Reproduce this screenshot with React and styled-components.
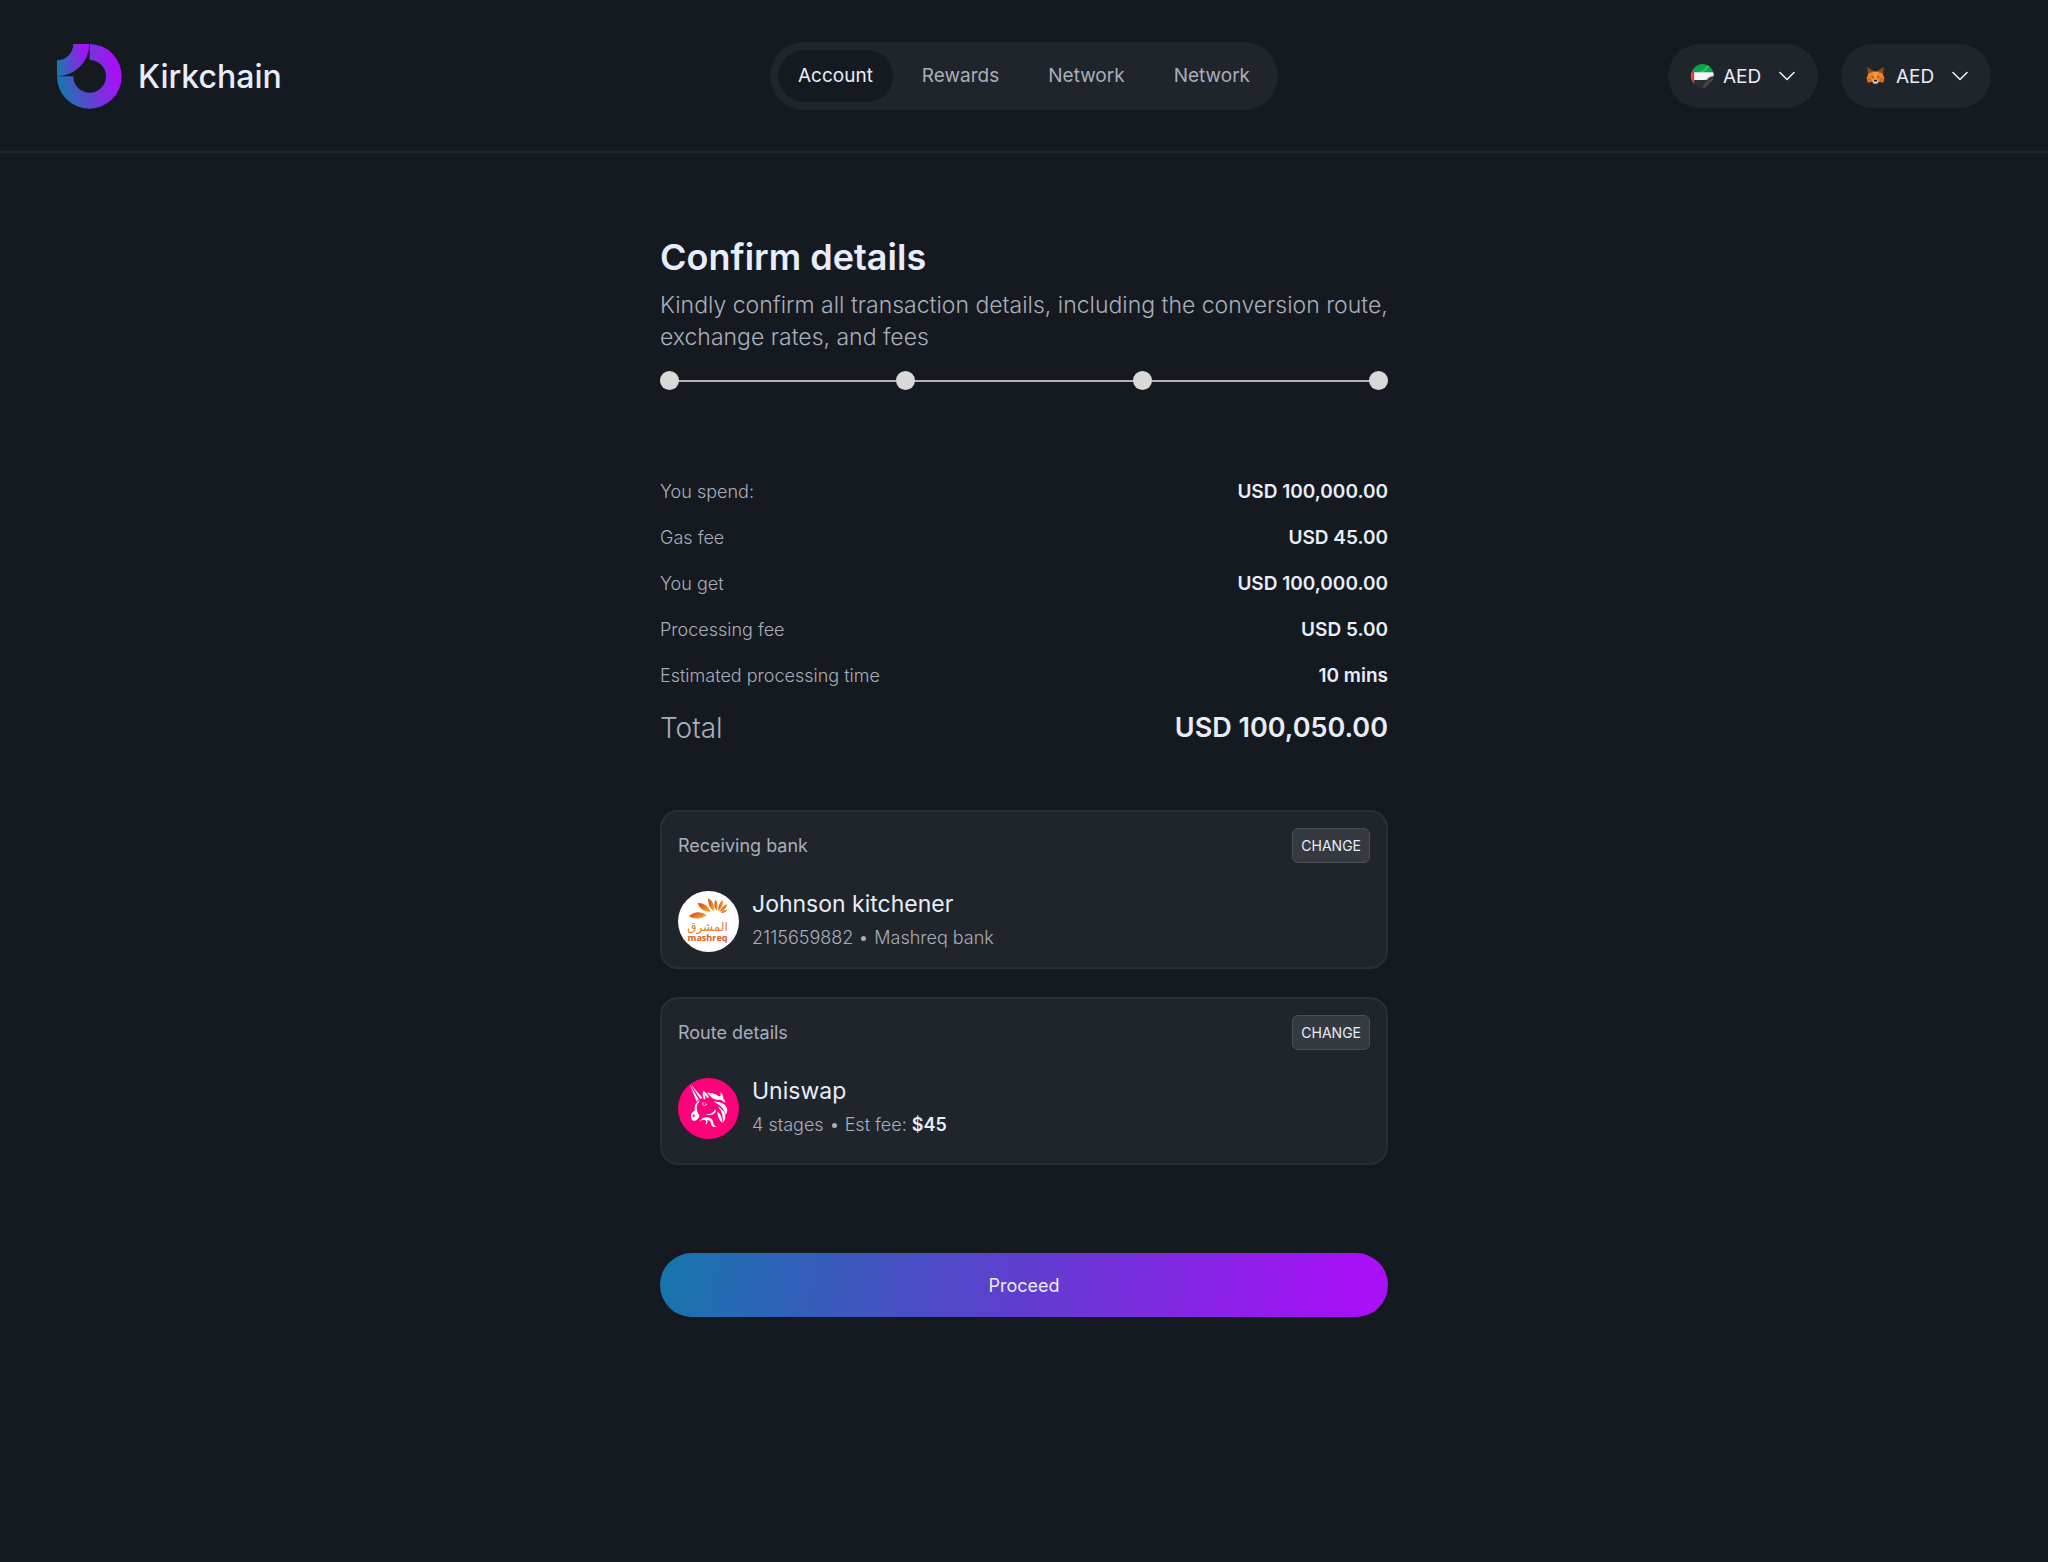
import styled, { createGlobalStyle } from "styled-components";
import { useState } from "react";

// Colors
const Colors = {
  background: "#151a20",
  panel: "#20252b",
  border: "#2a2f33",
  text: "#e8edfb",
  muted: "#a9aebc",
  dot: "#d9d9d9",
};

const navItems = ["Account", "Rewards", "Network", "Network"];

const details = [
  { label: "You spend:", value: "USD 100,000.00" },
  { label: "Gas fee", value: "USD 45.00" },
  { label: "You get", value: "USD 100,000.00" },
  { label: "Processing fee", value: "USD 5.00" },
  { label: "Estimated processing time", value: "10 mins" },
];

export default function App() {
  const [active, setActive] = useState(0);

  return (
    <>
      <GlobalStyle />
      <Header>
        <Brand href="#">
          <Logo />
          Kirkchain
        </Brand>
        <Nav>
          {navItems.map((item, i) => (
            <NavLink
              key={i}
              href="#"
              $active={i === active}
              onClick={() => setActive(i)}
            >
              {item}
            </NavLink>
          ))}
        </Nav>
        <Pickers>
          <Picker label="Currency" icon={<Flag />} />
          <Picker label="Wallet currency" icon={<Fox />} />
        </Pickers>
      </Header>
      <Main>
        <Title>Confirm details</Title>
        <Subtitle>
          Kindly confirm all transaction details, including the conversion
          route, exchange rates, and fees
        </Subtitle>
        <Steps>
          <Step />
          <Step />
          <Step />
          <Step />
        </Steps>

        {/* Transaction summary */}
        <Summary>
          {details.map((row) => (
            <Row key={row.label}>
              <dt>{row.label}</dt>
              <Amount>{row.value}</Amount>
            </Row>
          ))}
          <TotalRow>
            <dt>Total</dt>
            <TotalAmount>USD 100,050.00</TotalAmount>
          </TotalRow>
        </Summary>

        <Cards>
          <Card>
            <CardHeader>
              <CardLabel>Receiving bank</CardLabel>
              <ChangeButton type="button">CHANGE</ChangeButton>
            </CardHeader>
            <Party>
              <Mashreq />
              <div>
                <PartyName>Johnson kitchener</PartyName>
                <PartyInfo>
                  <span>2115659882</span>
                  <Bullet />
                  <span>Mashreq bank</span>
                </PartyInfo>
              </div>
            </Party>
          </Card>
          <Card $roomy>
            <CardHeader>
              <CardLabel>Route details</CardLabel>
              <ChangeButton type="button">CHANGE</ChangeButton>
            </CardHeader>
            <Party>
              <Unicorn />
              <div>
                <PartyName>Uniswap</PartyName>
                <PartyInfo>
                  <span>4 stages</span>
                  <Bullet />
                  <span>
                    Est fee: <Fee>$45</Fee>
                  </span>
                </PartyInfo>
              </div>
            </Party>
          </Card>
        </Cards>

        <Proceed type="button">Proceed</Proceed>
      </Main>
    </>
  );
}

function Picker({ label, icon }) {
  return (
    <PickerPill>
      {icon}
      <PickerSelect aria-label={label} defaultValue="AED">
        <option>AED</option>
        <option>USD</option>
      </PickerSelect>
      <Chevron viewBox="0 0 16 10" aria-hidden="true">
        <path d="M1 1.5 8 8.5 15 1.5" />
      </Chevron>
    </PickerPill>
  );
}

// Icons and logos

function Logo() {
  return (
    <LogoSvg viewBox="0 0 195 195" aria-hidden="true">
      <defs>
        <linearGradient id="logo" x1="0" y1="0.6" x2="1" y2="0.4">
          <stop offset="0.02" stopColor="#1976ae" />
          <stop offset="0.92" stopColor="#a90ff8" />
        </linearGradient>
      </defs>
      <path
        fill="url(#logo)"
        d="M0 49A49 49 0 0 0 49 0H97A97 97 0 0 1 0 97Z"
      />
      <path
        fill="url(#logo)"
        d="M98 0A97 97 0 1 1 0 97H49A49 49 0 1 0 98 48Z"
      />
    </LogoSvg>
  );
}

function Flag() {
  return (
    <SmallIcon viewBox="0 0 68 72" aria-hidden="true">
      <clipPath id="flag">
        <ellipse cx="34" cy="36" rx="34" ry="36" />
      </clipPath>
      <g clipPath="url(#flag)">
        <path fill="#2b2d31" d="M0 0H68V72H0Z" />
        <path fill="#0ca24b" d="M0 0H68V26H0Z" />
        <path fill="#2fbf69" d="M20 24Q40 18 50 2L56 5Q46 20 36 25Z" />
        <path fill="#f3f4f6" d="M0 25H68V36Q54 38 44 48H0Z" />
        <path fill="#c9ccd1" d="M40 47Q50 36 68 31V36Q54 38 48 48Z" />
        <path fill="#4a494a" d="M34 70Q44 50 66 42L66 48Q50 56 42 72Z" />
        <path fill="#d93f3f" d="M0 20H9V60H0Z" />
      </g>
    </SmallIcon>
  );
}

function Fox() {
  return (
    <SmallIcon viewBox="-8 -8 71 72" aria-hidden="true">
      <path fill="#8a4a1e" d="M2 0 24 14 21 24 4 24ZM53 0 31 14 34 24 51 24Z" />
      <path
        fill="#f0862b"
        d="M6 20 20 15H35L49 20 55 34 51 48 38 46 34 51H21L17 46 4 48 0 34Z"
      />
      <path fill="#d96f1c" d="M0 34 14 33 17 46 4 48ZM55 34 41 33 38 46 51 48Z" />
      <path fill="#f79a43" d="M20 15H35L31 34H24Z" />
      <path fill="#40302a" d="M14 29 22 30 21 34ZM41 29 33 30 34 34Z" />
      <path fill="#d9cfc8" d="M18 43 23 40H32L37 43 33 51H22Z" />
      <path fill="#241b18" d="M23 40H32L33 45H22Z" />
    </SmallIcon>
  );
}

function Mashreq() {
  return (
    <Avatar viewBox="0 0 182 182" role="img" aria-label="Mashreq">
      <defs>
        <linearGradient id="petal" x1="0" y1="0" x2="1" y2="0.6">
          <stop offset="0.2" stopColor="#d9531f" />
          <stop offset="1" stopColor="#f9a51a" />
        </linearGradient>
      </defs>
      <circle cx="91" cy="91" r="91" fill="#fff" />
      <g fill="url(#petal)">
        <path d="M32 75Q58 54 86 72Q60 90 32 75Z" />
        <path d="M58 36Q88 36 98 63Q68 62 58 36Z" />
        <path d="M90 21Q112 36 108 61Q88 48 90 21Z" />
        <path d="M112 25Q124 42 115 60Q104 44 112 25Z" />
        <path d="M134 26Q136 46 120 60Q118 40 134 26Z" />
        <path d="M147 39Q144 56 125 63Q130 45 147 39Z" />
        <path d="M147 57Q141 69 128 65Q134 55 147 57Z" />
      </g>
      <ArabicName x="88" y="118" textAnchor="middle">
        المشرق
      </ArabicName>
      <LatinName x="88" y="149" textAnchor="middle">
        mashreq
      </LatinName>
    </Avatar>
  );
}

function Unicorn() {
  return (
    <Avatar viewBox="0 0 182 182" role="img" aria-label="Uniswap">
      <circle cx="91" cy="91" r="91" fill="#ff007a" />
      <g fill="#fff">
        {/* horn and ears */}
        <path d="M35 19 55 69 62 65ZM39 20 66 63 73 59Z" />
        <path d="M75 38Q88 45 92 60L86 58 79 48 82 62 77 64Q71 51 75 38Z" />
        {/* mane */}
        <path d="M86 44Q108 43 122 55Q131 54 126 42Q137 51 135 62Q141 66 142 74L128 65Q108 67 97 55Z" />
        <path d="M106 70Q140 70 146 90Q149 101 141 110Q139 86 106 70Z" />
        <path d="M118 84Q140 96 141 113Q142 126 133 134Q137 103 118 84Z" />
        <path d="M117 99Q133 112 131 132Q119 124 117 99Z" />
        {/* muzzle */}
        <path d="M58 70Q48 81 50 97Q36 106 39 116Q40 128 50 128Q62 124 64 112Q56 102 56 90Q55 79 66 67Z" />
        <path d="M72 74Q83 70 86 80Q79 86 73 79Z" />
        {/* jaw and beard */}
        <path d="M82 109Q104 109 111 93Q115 97 111 103Q103 114 82 109Z" />
        <path d="M63 130Q73 116 88 117Q104 120 105 133Q107 145 116 146Q100 149 98 135Q97 124 87 126Q91 137 81 138Q89 129 80 125Q70 124 63 130Z" />
      </g>
      <circle cx="79" cy="77" r="4" fill="#ff007a" />
      <ellipse cx="47" cy="113" rx="3" ry="4" fill="#ff007a" />
    </Avatar>
  );
}

// Styled components

const GlobalStyle = createGlobalStyle`
  * {
    box-sizing: border-box;
  }
  body {
    margin: 0;
    background: ${Colors.background};
    color: ${Colors.text};
    font-family: Inter, "Liberation Sans", sans-serif;
  }
  a {
    text-decoration: none;
  }
  button,
  select {
    font-family: inherit;
    cursor: pointer;
  }
`;

const Header = styled.header`
  display: grid;
  grid-template-columns: 1fr auto 1fr;
  align-items: center;
  padding: 42px 57px 41px;
  border-bottom: 2px solid #20262b;
`;

const Brand = styled.a`
  display: flex;
  align-items: center;
  gap: 16px;
  color: ${Colors.text};
  font-size: 32px;
  font-weight: 500;
`;

const LogoSvg = styled.svg`
  width: 65px;
  height: 65px;
`;

const Nav = styled.nav`
  display: flex;
  gap: 9px;
  padding: 8px;
  border-radius: 35px;
  background: ${Colors.panel};
`;

const NavLink = styled.a`
  padding: 0 20px;
  border-radius: 26px;
  background: ${(props) => (props.$active ? Colors.background : "none")};
  color: ${(props) => (props.$active ? Colors.text : Colors.muted)};
  font-size: 19px;
  line-height: 52px;
`;

const Pickers = styled.div`
  display: flex;
  justify-content: flex-end;
  gap: 23px;
`;

const PickerPill = styled.label`
  display: flex;
  align-items: center;
  gap: 9px;
  height: 64px;
  padding: 0 23px;
  border-radius: 32px;
  background: ${Colors.panel};
`;

const PickerSelect = styled.select`
  appearance: none;
  width: 47px;
  padding: 0;
  border: none;
  background: none;
  color: ${Colors.text};
  font-size: 19px;
`;

const SmallIcon = styled.svg`
  width: 23px;
  height: 24px;
`;

const Chevron = styled.svg`
  width: 16px;
  height: 10px;
  fill: none;
  stroke: ${Colors.text};
  stroke-width: 1.6;
  stroke-linecap: round;
  stroke-linejoin: round;
  pointer-events: none;
`;

const Main = styled.main`
  display: flex;
  flex-direction: column;
  width: 100%;
  max-width: 728px;
  margin: 0 auto;
  padding: 80px 0;
`;

const Title = styled.h1`
  margin: 0 0 8px;
  font-size: 36px;
  font-weight: 600;
  line-height: 48px;
`;

const Subtitle = styled.p`
  margin: 0 0 18px;
  color: ${Colors.muted};
  font-size: 23px;
  font-weight: 300;
  line-height: 32px;
`;

const Steps = styled.div`
  display: flex;
  justify-content: space-between;
  background: linear-gradient(#b5b5b8, #b5b5b8) center / 100% 2px no-repeat;
`;

const Step = styled.span`
  width: 19px;
  height: 19px;
  border-radius: 50%;
  background: ${Colors.dot};
`;

const Summary = styled.dl`
  display: flex;
  flex-direction: column;
  gap: 22px;
  margin: 90px 0 64px;
`;

const Row = styled.div`
  display: flex;
  justify-content: space-between;
  color: ${Colors.muted};
  font-size: 18px;
  font-weight: 300;
  line-height: 24px;
`;

const TotalRow = styled(Row)`
  font-size: 28px;
  line-height: 36px;
`;

const Amount = styled.dd`
  margin: 0;
  color: ${Colors.text};
  font-size: 19px;
  font-weight: 600;
`;

const TotalAmount = styled(Amount)`
  font-size: 27px;
`;

const Cards = styled.div`
  display: flex;
  flex-direction: column;
  gap: 28px;
  margin-bottom: 88px;
`;

const Card = styled.section`
  padding: 16px 16px ${(props) => (props.$roomy ? 21 : 12)}px;
  border: 2px solid ${Colors.border};
  border-radius: 18px;
  background: ${Colors.panel};
`;

const CardHeader = styled.div`
  display: flex;
  align-items: center;
  justify-content: space-between;
  margin-bottom: 24px;
`;

const CardLabel = styled.h2`
  margin: 0;
  color: ${Colors.muted};
  font-size: 18px;
  font-weight: 400;
`;

const ChangeButton = styled.button`
  height: 35px;
  padding: 0 8px;
  border: 1px solid #4a4f54;
  border-radius: 6px;
  background: #343a40;
  color: ${Colors.text};
  font-size: 14px;
`;

const Party = styled.div`
  display: flex;
  align-items: center;
  gap: 13px;
`;

const Avatar = styled.svg`
  width: 61px;
  height: 61px;
`;

const ArabicName = styled.text`
  fill: #e87a24;
  font-family: "DejaVu Sans", sans-serif;
  font-size: 36px;
`;

const LatinName = styled.text`
  fill: #dd5a26;
  font-family: "Open Sans", sans-serif;
  font-size: 27px;
  font-weight: 700;
`;

const PartyName = styled.div`
  font-size: 23px;
  line-height: 34px;
`;

const PartyInfo = styled.div`
  display: flex;
  align-items: center;
  gap: 8px;
  color: ${Colors.muted};
  font-size: 18px;
  font-weight: 300;
  line-height: 34px;
`;

const Bullet = styled.span`
  width: 5px;
  height: 5px;
  border-radius: 50%;
  background: ${Colors.muted};
`;

const Fee = styled.strong`
  color: ${Colors.text};
  font-weight: 600;
`;

const Proceed = styled.button`
  height: 64px;
  border: none;
  border-radius: 32px;
  background: linear-gradient(100deg, #1576ab, #633bd1 52%, #a90ff8 96%);
  color: ${Colors.text};
  font-size: 18px;
`;
